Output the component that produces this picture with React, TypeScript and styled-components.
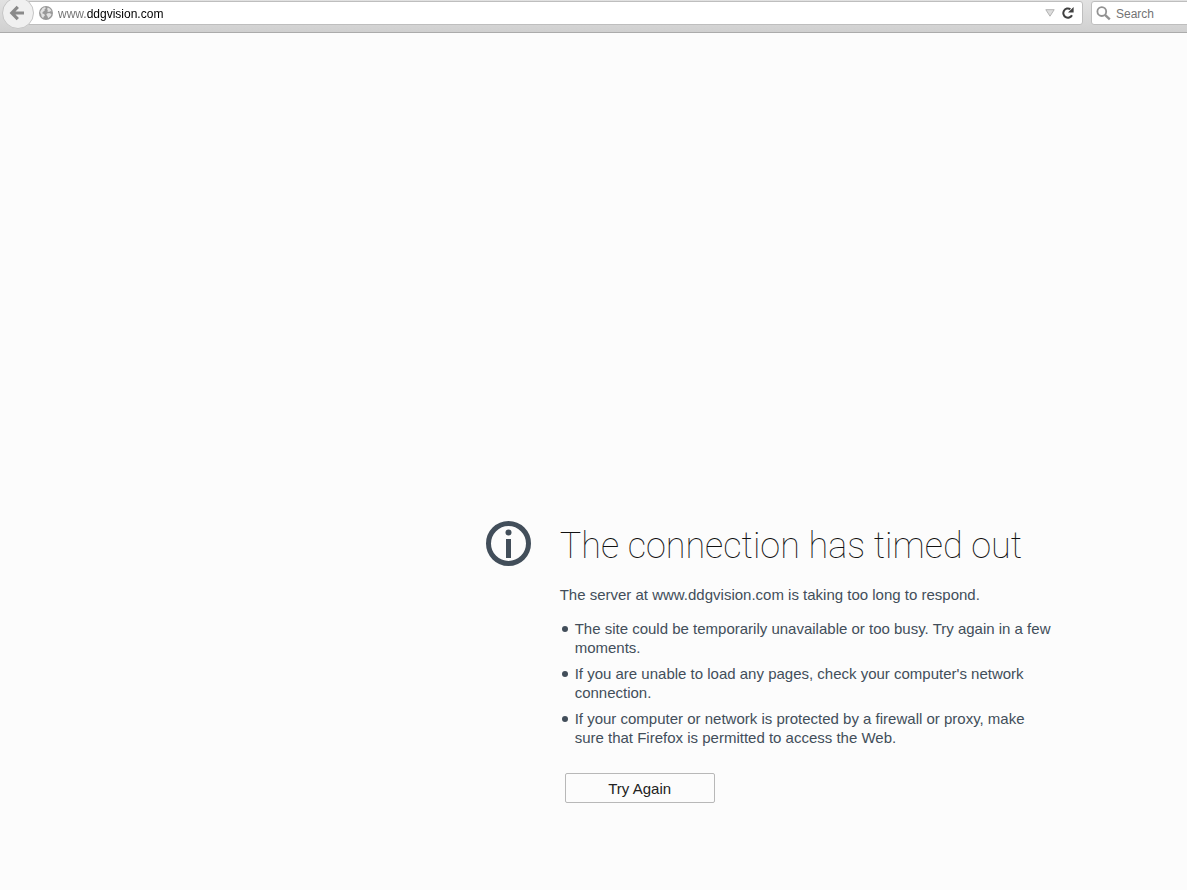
import React from "react";
import styled, { createGlobalStyle } from "styled-components";

const GlobalStyle = createGlobalStyle`
  *, *::before, *::after { box-sizing: border-box; }
  body {
    margin: 0;
    background: #fcfcfc;
    color: #424e5a;
    font-family: "Liberation Sans", Helvetica, Arial, sans-serif;
  }
`;

const Toolbar = styled.header`
  display: flex;
  align-items: flex-start;
  height: 33px;
  padding-top: 1px;
  background: linear-gradient(#e2e2e2, #d0d0d0);
  border-bottom: 1px solid #ababab;
  overflow: hidden;
`;

const BackButton = styled.button`
  flex: none;
  display: grid;
  place-items: center;
  width: 32px;
  height: 32px;
  margin: -4px -6px 0 2px;
  padding: 0 2px 0 0;
  border: 1px solid #c6c6c6;
  border-radius: 50%;
  background: #f0f0f0;
  z-index: 1;
`;

const Field = styled.label<{ $grow?: boolean }>`
  display: flex;
  align-items: center;
  flex: ${(p) => (p.$grow ? "1 1 auto" : "0 0 104px")};
  height: 24px;
  min-width: 0;
  background: #fff;
  border: 1px solid #bebebe;
  border-radius: ${(p) => (p.$grow ? "0 3px 3px 0" : "3px")};
  padding: ${(p) => (p.$grow ? "0 5px 0 10px" : "0 0 0 4px")};
  margin-right: ${(p) => (p.$grow ? "8px" : "-8px")};
`;

const FieldInput = styled.input`
  flex: 1;
  min-width: 0;
  width: 100%;
  height: 22px;
  border: 0;
  outline: 0;
  padding: 1px 0 0;
  margin-left: 5px;
  background: transparent;
  color: #000;
  font: 12px "Liberation Sans", Helvetica, Arial, sans-serif;
  &::placeholder { color: #737373; opacity: 1; }
`;

const AddressInput = styled(FieldInput)`
  color: transparent;
  background: linear-gradient(90deg, #707070 29px, #000 29px);
  background-clip: text;
  -webkit-background-clip: text;
  caret-color: #000;
`;

const IconButton = styled.button`
  flex: none;
  display: grid;
  place-items: center;
  width: 18px;
  height: 22px;
  padding: 0;
  border: 0;
  background: none;
`;

const Page = styled.main`
  display: flex;
  align-items: flex-start;
  gap: 29px;
  padding: 485px 24px 80px calc(41% - 1px);
`;

const InfoIcon = styled.svg`
  flex: none;
  width: 45px;
  height: 45px;
  margin-top: 3px;
`;

const Content = styled.section`
  max-width: 494px;
  font-size: 15px;
  line-height: 19px;
`;

const Title = styled.h1`
  margin: 0;
  font-family: Roboto, sans-serif;
  font-size: 36px;
  font-weight: 100;
  line-height: 56px;
  color: #111;
`;

const Lead = styled.p`
  margin: 11px 0 0;
`;

const Reasons = styled.ul`
  margin: 15px 0 0;
  padding: 0 0 0 15px;
  list-style: none;
`;

const Reason = styled.li`
  position: relative;
  margin-bottom: 7px;
  &::before {
    content: "";
    position: absolute;
    left: -13px;
    top: 7px;
    width: 6px;
    height: 6px;
    border-radius: 50%;
    background: #424e5a;
  }
`;

const RetryButton = styled.button`
  width: 150px;
  height: 30px;
  margin: 19px 0 0 5px;
  padding: 0;
  border: 1px solid #b8b8b8;
  border-radius: 2px;
  background: #fcfcfc;
  color: #222;
  font: 15px "Liberation Sans", Helvetica, Arial, sans-serif;
`;

const reasons = [
  "The site could be temporarily unavailable or too busy. Try again in a few moments.",
  "If you are unable to load any pages, check your computer's network connection.",
  "If your computer or network is protected by a firewall or proxy, make sure that Firefox is permitted to access the Web.",
];

export default function App() {
  return (
    <>
      <GlobalStyle />
      <Toolbar>
        <BackButton aria-label="Back">
          <svg width="16" height="16" viewBox="0 0 16 16" fill="none" stroke="#8a8a8a" strokeWidth="3.2">
            <path d="M8.8 1.8 2.8 8l6 6.2M3.2 8H15" />
          </svg>
        </BackButton>
        <Field $grow>
          <svg width="14" height="14" viewBox="0 0 14 14">
            <circle cx="7" cy="7" r="7" fill="#999" />
            <path d="M1.4 5.2 3.6 2l2.6-.9.5 1.3-1.3 1.2.4 1-2 1.3-.6 1.4 2.2.9.5 1.4-1.4 1.4-.3 1.2-1.7-1.7-.3-2.3-.9-1.2ZM8.8 1.5l2.4 1.2 1.4 2.6-1.5-.1-1 .8-1.8-.5.6-1.5-.9-.8ZM8 7.5l2.2-.6 2.3 1-.7 2.2-2.6 2.2-.9-2.4-1-1.2Z" fill="#e2e2e2" />
          </svg>
          <AddressInput aria-label="Address" defaultValue="www.ddgvision.com" spellCheck={false} />
          <IconButton aria-label="Show history">
            <svg width="10" height="8" viewBox="0 0 10 8">
              <path d="M.8.7h8.4L5 7.2Z" fill="#ddd" stroke="#b3b3b3" />
            </svg>
          </IconButton>
          <IconButton aria-label="Reload">
            <svg width="12" height="12" viewBox="0 0 12 12">
              <path d="M10 8.2A4.6 4.6 0 1 1 8.4 2.2" fill="none" stroke="#404040" strokeWidth="2" />
              <path d="M11.6 0v5.6H6Z" fill="#404040" />
            </svg>
          </IconButton>
        </Field>
        <Field>
          <svg width="15" height="15" viewBox="0 0 15 15" fill="none" stroke="#929292">
            <circle cx="5.8" cy="5.6" r="4.4" strokeWidth="1.8" />
            <path d="m9 8.8 4.8 4.6" strokeWidth="2.4" />
          </svg>
          <FieldInput aria-label="Search" placeholder="Search" />
        </Field>
      </Toolbar>
      <Page>
        <InfoIcon viewBox="0 0 45 45" aria-hidden="true">
          <circle cx="22.5" cy="22.5" r="20" fill="none" stroke="#424e5a" strokeWidth="5" />
          <circle cx="22.5" cy="11.5" r="3" fill="#424e5a" />
          <path d="M20 18h5v19h-5Z" fill="#424e5a" />
        </InfoIcon>
        <Content>
          <Title>The connection has timed out</Title>
          <Lead>The server at www.ddgvision.com is taking too long to respond.</Lead>
          <Reasons>
            {reasons.map((text) => (
              <Reason key={text}>{text}</Reason>
            ))}
          </Reasons>
          <RetryButton>Try Again</RetryButton>
        </Content>
      </Page>
    </>
  );
}
